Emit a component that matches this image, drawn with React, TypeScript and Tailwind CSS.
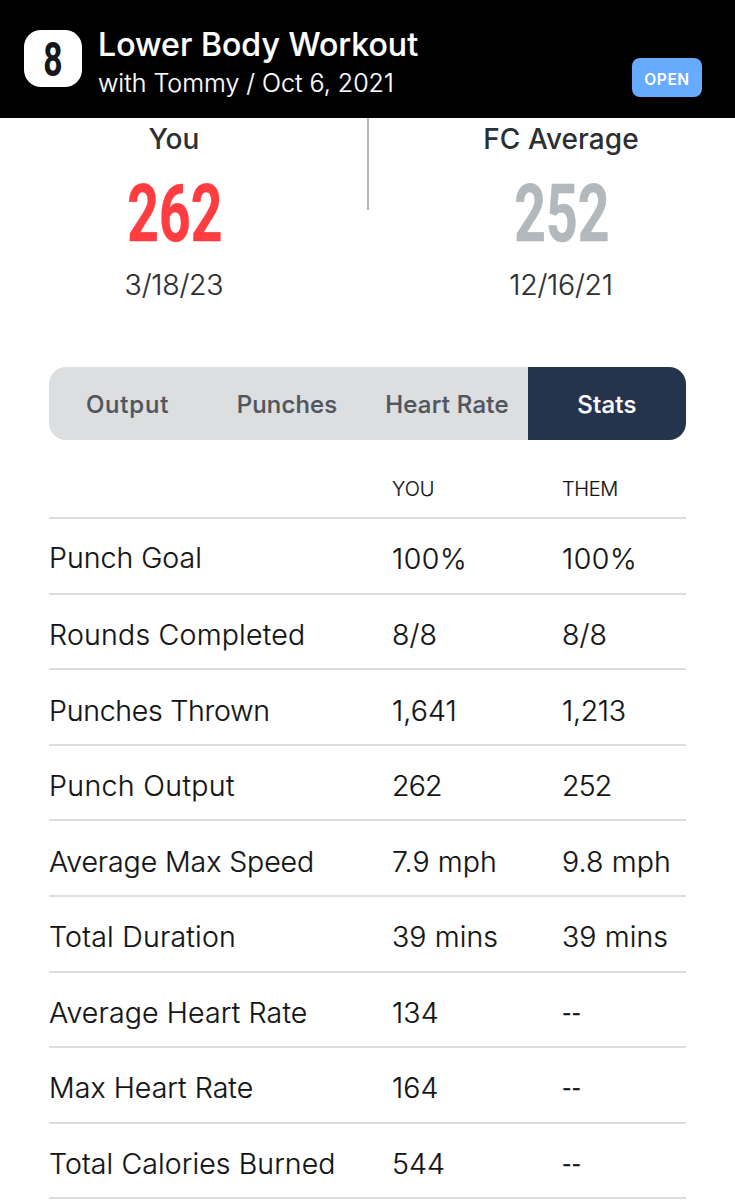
import { useState } from 'react';
import clsx from 'clsx';

const TABS = [
  { label: 'Output', width: 'w-[157px]', text: 'tracking-[0.8px]' },
  { label: 'Punches', width: 'w-[162px]', text: 'tracking-[0.15px]' },
  { label: 'Heart Rate', width: 'w-[160px]', text: 'pr-[2px] tracking-[0.25px]' },
  { label: 'Stats', width: 'w-[158px]', text: 'tracking-[0.2px]' },
];

const STATS = [
  { label: 'Punch Goal', you: '100%', them: '100%', text: '-mt-[2px] tracking-[0px]' },
  { label: 'Rounds Completed', you: '8/8', them: '8/8', text: 'tracking-[0.22px]' },
  { label: 'Punches Thrown', you: '1,641', them: '1,213', text: 'tracking-[-0.27px]' },
  { label: 'Punch Output', you: '262', them: '252', text: 'tracking-[0.35px]' },
  { label: 'Average Max Speed', you: '7.9 mph', them: '9.8 mph', text: 'tracking-[-0.08px]' },
  { label: 'Total Duration', you: '39 mins', them: '39 mins', text: 'tracking-[0.23px]' },
  { label: 'Average Heart Rate', you: '134', them: '--', text: 'tracking-[0.15px]' },
  { label: 'Max Heart Rate', you: '164', them: '--', text: 'tracking-[0.05px]' },
  { label: 'Total Calories Burned', you: '544', them: '--', text: 'tracking-[0.1px]' },
];

function valueSpacing(value: string) {
  if (value === '--') return 'origin-left scale-x-[0.74] [-webkit-text-stroke:0.3px]';
  if (value === '262' || value === '252') return 'tracking-[-0.8px]';
  if (value === '1,213') return 'tracking-[-0.3px]';
  if (value === '100%') return 'tracking-[0.5px]';
  return 'tracking-[0.1px]';
}

function Header() {
  return (
    <header className="flex h-[118px] items-start bg-black pl-[24px] pr-[33px] text-white">
      <div className="mt-[30px] flex h-[57px] w-[58px] items-center justify-center rounded-[17px] bg-white">
        <span className="mt-[3px] scale-x-[0.7] font-['Roboto'] text-[48px] font-bold leading-none text-[#15171a]">8</span>
      </div>
      <div className="ml-[16px] mt-[25px] flex-1 whitespace-nowrap">
        <h1 className="text-[32px] font-medium leading-[40px] tracking-[0.05px] [-webkit-text-stroke:0.2px]">
          Lower Body Workout
        </h1>
        <p className="text-[25px] font-light leading-[36px] [-webkit-text-stroke:0.2px]">with Tommy / Oct 6, 2021</p>
      </div>
      <button className="mt-[58px] h-[39px] w-[70px] rounded-[8px] bg-[#66abff] pt-[4px] text-[15.5px] font-semibold tracking-[0.6px]">
        OPEN
      </button>
    </header>
  );
}

function Score({ name, value, date, color }: { name: string; value: string; date: string; color: string }) {
  return (
    <div className="flex w-[250px] flex-col items-center text-[#2c2f33]">
      <span className="text-[28px] font-medium leading-[42px] tracking-[0.05px]">{name}</span>
      <span
        className={clsx(
          "ml-px mt-[12px] scale-x-[0.69] font-['Roboto'] text-[80px] font-bold leading-[84px] [-webkit-text-stroke:0.5px]",
          color,
        )}
      >
        {value}
      </span>
      <span className="mt-[8px] text-[28.5px] font-light leading-[42px] tracking-[-0.25px] [-webkit-text-stroke:0.2px]">
        {date}
      </span>
    </div>
  );
}

export default function App() {
  const [active, setActive] = useState('Stats');

  return (
    <div className="h-[1200px] w-[735px] overflow-hidden bg-white font-['Inter',sans-serif]">
      <Header />

      <section className="flex h-[249px] justify-between pl-[49px] pr-[49px]">
        <Score name="You" value="262" date="3/18/23" color="text-[#ff3d40]" />
        <div className="h-[92px] w-[2px] bg-[#b3b5b7]" />
        <Score name="FC Average" value="252" date="12/16/21" color="text-[#b2b8bc]" />
      </section>

      <nav className="mx-[49px] flex h-[73px] overflow-hidden rounded-[17px] bg-[#dddee0]">
        {TABS.map(tab => (
          <button
            key={tab.label}
            onClick={() => setActive(tab.label)}
            className={clsx(
              'whitespace-nowrap pt-[2px] text-[24px] font-medium [-webkit-text-stroke:0.2px]',
              tab.width,
              tab.text,
              active === tab.label ? 'bg-[#26334d] text-white' : 'text-[#50565d]',
            )}
          >
            {tab.label}
          </button>
        ))}
      </nav>

      <section className="mx-[49px] text-[#121416]">
        <div className="grid h-[79.3px] grid-cols-[343px_170px_1fr] items-center border-b-2 border-[#dcdddd] pt-[21px] text-[20px] font-light [-webkit-text-stroke:0.2px]">
          <span />
          <span>YOU</span>
          <span className="tracking-[-0.4px]">THEM</span>
        </div>
        {STATS.map(row => (
          <div
            key={row.label}
            className="grid h-[75.55px] grid-cols-[343px_170px_1fr] items-center whitespace-nowrap border-b-2 border-[#dcdddd] pt-[7.5px] text-[28.5px] font-light [-webkit-text-stroke:0.2px]"
          >
            <span className={row.text}>{row.label}</span>
            <span className={valueSpacing(row.you)}>{row.you}</span>
            <span className={valueSpacing(row.them)}>{row.them}</span>
          </div>
        ))}
      </section>
    </div>
  );
}
